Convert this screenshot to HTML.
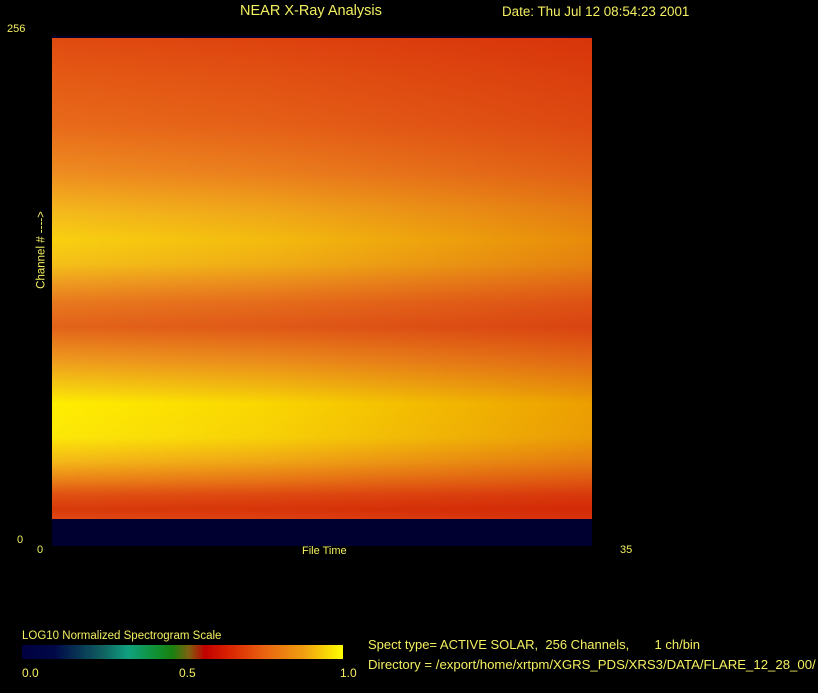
<!DOCTYPE html>
<html><head><style>
body{margin:0;width:818px;height:693px;background:#000;position:relative;overflow:hidden;font-family:"Liberation Sans",sans-serif;color:#f4f060;font-size:12px}
.t{position:absolute;white-space:pre;line-height:1}
#plot{position:absolute;left:52px;top:36px;width:540px;height:510px;background:#000030}
#img{position:absolute;left:0;top:2px;width:540px;height:481px;
background:linear-gradient(to right,rgba(200,0,0,0) 0%,rgba(200,0,0,0.1) 40%,rgba(200,10,0,0.35) 100%),
linear-gradient(to bottom,#e04a10 0%,#e45a14 8%,#e86a1a 18%,#ee8c20 28%,#f4b81c 36%,#f8d010 42%,#f4c018 47%,#ee9a20 51%,#e8781e 55%,#e2621a 60%,#ee9a1e 67%,#f6d010 73%,#ffee00 76%,#fce808 83%,#f4b818 88%,#ea8018 92%,#e05012 95%,#d83a0a 98%,#e04812 100%)}
#bar{position:absolute;left:22px;top:645px;width:321px;height:14px;
background:linear-gradient(to right,#000040 0%,#000848 10%,#106060 25%,#10a080 33%,#109030 42%,#1a8010 47%,#806010 52%,#c00000 57%,#d82000 64%,#e86010 75%,#f0a010 88%,#ffff00 100%)}
</style></head><body>
<div class="t" style="left:240px;top:4px;font-size:14.5px">NEAR X-Ray Analysis</div>
<div class="t" style="left:502px;top:5px;font-size:13.4px">Date: Thu Jul 12 08:54:23 2001</div>
<div class="t" style="left:7px;top:24px;font-size:11px">256</div>
<div id="plot"><div id="img"></div></div>
<div class="t" style="left:17px;top:535px;font-size:11px">0</div>
<div class="t" style="left:37px;top:545px;font-size:11px">0</div>
<div class="t" style="left:302px;top:546px;font-size:11px">File Time</div>
<div class="t" style="left:620px;top:545px;font-size:11px">35</div>
<div class="t" style="left:42px;top:250px;font-size:11.5px;transform:translate(-50%,-50%) rotate(-90deg)">Channel # ----&gt;</div>
<div class="t" style="left:22px;top:631px;font-size:11.5px">LOG10 Normalized Spectrogram Scale</div>
<div id="bar"></div>
<div class="t" style="left:22px;top:667px">0.0</div>
<div class="t" style="left:179px;top:667px">0.5</div>
<div class="t" style="left:340px;top:667px">1.0</div>
<div class="t" style="left:368px;top:638px;font-size:13px">Spect type= ACTIVE SOLAR,  256 Channels,       1 ch/bin</div>
<div class="t" style="left:368px;top:658px;font-size:13.2px">Directory = /export/home/xrtpm/XGRS_PDS/XRS3/DATA/FLARE_12_28_00/</div>
</body></html>
